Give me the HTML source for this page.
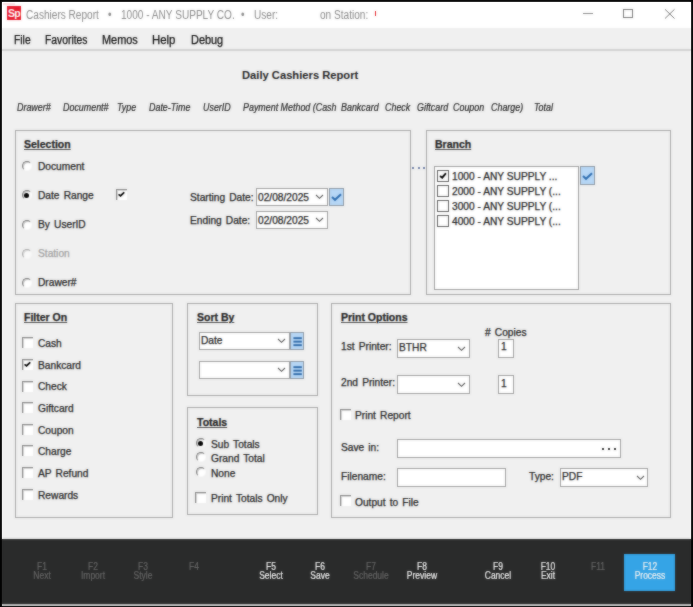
<!DOCTYPE html>
<html><head><meta charset="utf-8">
<style>
*{margin:0;padding:0;box-sizing:border-box}
html,body{width:693px;height:607px;overflow:hidden;background:#000}
body{position:relative;font-family:"Liberation Sans",sans-serif;font-size:10px;color:#1e1e1e}
#root{position:absolute;left:0;top:0;width:693px;height:607px}
.t,.gt,.mn{-webkit-text-stroke:0.25px currentColor}
.a{position:absolute}
.t{position:absolute;white-space:nowrap;line-height:10px;font-size:10.2px;word-spacing:1.3px}
.bl{word-spacing:0}
#win{position:absolute;left:2px;top:2px;width:689px;height:604px;background:#f0f0f0}
#title{position:absolute;left:2px;top:2px;width:689px;height:26px;background:#fff}
#menu{position:absolute;left:2px;top:28px;width:689px;height:23px;background:#f0f0f0;border-bottom:2px solid #d2d2d2}
.tt{position:absolute;white-space:nowrap;font-size:12px;line-height:12px;color:#8a8a8a;transform:scaleX(.84);transform-origin:0 0}
.mn{position:absolute;white-space:nowrap;font-size:12px;line-height:12px;color:#111;transform:scaleX(.87);transform-origin:0 0}
.grp{position:absolute;border:1px solid #a8a8a8}
.gt{position:absolute;white-space:nowrap;font-weight:bold;text-decoration:underline;text-decoration-color:#555;font-size:10.5px;line-height:10px;color:#222}
.hd{position:absolute;white-space:nowrap;font-style:italic;font-size:10px;line-height:10px;color:#2a2a2a;transform:scaleX(.89);transform-origin:0 0;-webkit-text-stroke:0.2px currentColor}
.inp{position:absolute;background:#fff;border:1px solid #a0a0a0}
.cb{position:absolute;width:11px;height:11px;background:#fff;border-top:1px solid #8a8a8a;border-left:1px solid #8a8a8a;box-shadow:inset 1px 1px 0 #d4d4d4}
.rd{position:absolute;width:10px;height:10px;border-radius:50%;background:#fff;border:1.5px solid #fafafa;border-top-color:#7c7c7c;border-left-color:#7c7c7c;box-shadow:inset 1px 1px 0 #c8c8c8}
.rd.on::after{content:"";position:absolute;left:1.3px;top:1.6px;width:5px;height:5px;border-radius:50%;background:#000}
.mcb{position:absolute;width:12px;height:12px;background:#fff;border:1.5px solid #606060}
.chev{position:absolute;width:5px;height:5px;border-right:1px solid #555;border-bottom:1px solid #555;transform:rotate(45deg)}
.btn{position:absolute;background:#b7d7f6;border:1px solid #8e9aa6}
#foot{position:absolute;left:2px;top:539px;width:689px;height:65px;background:#2a2b2b}
#fline{position:absolute;left:2px;top:604px;width:689px;height:2px;background:#b4b4b4}
.fk{position:absolute;width:50px;text-align:center;white-space:nowrap;font-size:10px;line-height:9.3px;color:#666;transform:scaleX(.85);transform-origin:50% 0;-webkit-text-stroke:0.2px currentColor}
.fk.on{color:#f2f2f2}
</style></head><body><div id="root">
<div id="win"></div>
<div id="title"></div>
<div id="menu"></div>

<!-- logo -->
<div class="a" style="left:3px;top:3px;width:12px;height:2px;background:#fbe1e5"></div>
<div class="a" style="left:7.4px;top:6.4px;width:14px;height:14px;background:#e8192c;color:#fff;font-weight:bold;font-size:10.5px;line-height:14px;text-align:center;letter-spacing:-0.8px;text-indent:-1px">Sp</div>
<div class="tt" style="left:26px;top:9px">Cashiers Report</div>
<div class="tt" style="left:108px;top:9px">•</div>
<div class="tt" style="left:121px;top:9px">1000 - ANY SUPPLY CO.</div>
<div class="tt" style="left:241px;top:9px">•</div>
<div class="tt" style="left:254px;top:9px">User:</div>
<div class="tt" style="left:320px;top:9px">on Station:</div>
<div class="a" style="left:375px;top:11px;width:1px;height:5px;background:#e31e24"></div>
<!-- window buttons -->
<div class="a" style="left:583px;top:13px;width:10px;height:1px;background:#8a8a8a"></div>
<div class="a" style="left:623px;top:9px;width:10px;height:9px;border:1px solid #7a7a7a"></div>
<svg class="a" style="left:664px;top:8px" width="12" height="12"><path d="M1 1.3L10.5 10.5M10.5 1.3L1 10.5" stroke="#7a7a7a" stroke-width="1"/></svg>

<!-- menu -->
<div class="mn" style="left:14px;top:34px;transform:scaleX(0.86)">File</div>
<div class="mn" style="left:45px;top:34px;transform:scaleX(0.86)">Favorites</div>
<div class="mn" style="left:102px;top:34px;transform:scaleX(0.91)">Memos</div>
<div class="mn" style="left:152px;top:34px;transform:scaleX(0.95)">Help</div>
<div class="mn" style="left:191px;top:34px;transform:scaleX(0.91)">Debug</div>

<div class="a" style="left:242px;top:70px;font-weight:bold;font-size:11.2px;line-height:11px;color:#222;white-space:nowrap">Daily Cashiers Report</div>

<!-- headers -->
<div class="hd" style="left:17px;top:103px">Drawer#</div>
<div class="hd" style="left:63px;top:103px">Document#</div>
<div class="hd" style="left:117px;top:103px">Type</div>
<div class="hd" style="left:149px;top:103px">Date-Time</div>
<div class="hd" style="left:203px;top:103px">UserID</div>
<div class="hd" style="left:243px;top:103px">Payment Method (Cash</div>
<div class="hd" style="left:341px;top:103px">Bankcard</div>
<div class="hd" style="left:385px;top:103px">Check</div>
<div class="hd" style="left:417px;top:103px">Giftcard</div>
<div class="hd" style="left:453px;top:103px">Coupon</div>
<div class="hd" style="left:491px;top:103px">Charge)</div>
<div class="hd" style="left:534px;top:103px">Total</div>

<!-- SELECTION -->
<div class="grp" style="left:15px;top:130px;width:396px;height:165px"></div>
<div class="gt" style="left:24px;top:139px">Selection</div>
<div class="rd" style="left:22px;top:161px"></div><div class="t" style="left:38px;top:162px">Document</div>
<div class="rd on" style="left:22px;top:190px"></div><div class="t" style="left:38px;top:191px">Date Range</div>
<div class="rd" style="left:22px;top:220px"></div><div class="t" style="left:38px;top:220px">By UserID</div>
<div class="rd" style="left:22px;top:249px;opacity:.6"></div><div class="t" style="left:38px;top:249px;color:#a0a0a0">Station</div>
<div class="rd" style="left:22px;top:278px"></div><div class="t" style="left:38px;top:278px">Drawer#</div>
<div class="cb" style="left:116px;top:189px"></div><svg class="a" style="left:118px;top:190px" width="10" height="10"><path d="M1.2 4.9L2.5 5.9L5.7 2.8" fill="none" stroke="#000" stroke-width="1.8" stroke-linecap="round"/></svg>

<div class="t" style="left:190px;top:193px">Starting Date:</div>
<div class="inp" style="left:256px;top:188px;width:72px;height:18px"></div>
<div class="t" style="left:258px;top:193px">02/08/2025</div>
<svg class="a" style="left:315.4px;top:194.3px" width="9" height="6"><path d="M1 1L4.5 4.3L8 1" fill="none" stroke="#5a5a5a" stroke-width="1.15"/></svg>
<div class="btn" style="left:329px;top:188px;width:15px;height:18px"></div><svg class="a" style="left:329px;top:188px" width="15" height="18"><path d="M3 9L6 11.8L12 6.2" fill="none" stroke="#2e6db0" stroke-width="2"/></svg>
<div class="t" style="left:190px;top:216px">Ending Date:</div>
<div class="inp" style="left:256px;top:211px;width:72px;height:18px"></div>
<div class="t" style="left:258px;top:216px">02/08/2025</div>
<svg class="a" style="left:315.4px;top:217.0px" width="9" height="6"><path d="M1 1L4.5 4.3L8 1" fill="none" stroke="#5a5a5a" stroke-width="1.15"/></svg>

<div class="a" style="left:412px;top:167px;width:2px;height:2px;background:#7080a8"></div><div class="a" style="left:417.5px;top:167px;width:2px;height:2px;background:#7080a8"></div><div class="a" style="left:423px;top:167px;width:2px;height:2px;background:#7080a8"></div>

<!-- BRANCH -->
<div class="grp" style="left:426px;top:130px;width:245px;height:165px"></div>
<div class="gt" style="left:435px;top:139px">Branch</div>
<div class="inp" style="left:434px;top:166px;width:145px;height:124px"></div>
<div class="mcb" style="left:437px;top:170px"></div><svg class="a" style="left:437px;top:170px" width="12" height="12"><path d="M3.6 6.4L5.2 7.6L8.4 3.8" fill="none" stroke="#000" stroke-width="1.9" stroke-linecap="round"/></svg><div class="t bl" style="left:452px;top:172px">1000 - ANY SUPPLY ...</div>
<div class="mcb" style="left:437px;top:185px"></div><div class="t bl" style="left:452px;top:187px">2000 - ANY SUPPLY (...</div>
<div class="mcb" style="left:437px;top:200px"></div><div class="t bl" style="left:452px;top:202px">3000 - ANY SUPPLY (...</div>
<div class="mcb" style="left:437px;top:215px"></div><div class="t bl" style="left:452px;top:217px">4000 - ANY SUPPLY (...</div>
<div class="btn" style="left:580px;top:166px;width:15px;height:19px"></div><svg class="a" style="left:580px;top:166.5px" width="15" height="18"><path d="M3 9L6 11.8L12 6.2" fill="none" stroke="#2e6db0" stroke-width="2"/></svg>

<!-- FILTER ON -->
<div class="grp" style="left:15px;top:303px;width:158px;height:215px"></div>
<div class="gt" style="left:24px;top:312px">Filter On</div>
<div class="cb" style="left:22px;top:337px"></div><div class="t" style="left:38px;top:339px">Cash</div>
<div class="cb" style="left:22px;top:359px"></div><svg class="a" style="left:24px;top:360px" width="10" height="10"><path d="M1.2 4.9L2.5 5.9L5.7 2.8" fill="none" stroke="#000" stroke-width="1.8" stroke-linecap="round"/></svg><div class="t" style="left:38px;top:361px">Bankcard</div>
<div class="cb" style="left:22px;top:381px"></div><div class="t" style="left:38px;top:382px">Check</div>
<div class="cb" style="left:22px;top:402px"></div><div class="t" style="left:38px;top:404px">Giftcard</div>
<div class="cb" style="left:22px;top:424px"></div><div class="t" style="left:38px;top:426px">Coupon</div>
<div class="cb" style="left:22px;top:445px"></div><div class="t" style="left:38px;top:447px">Charge</div>
<div class="cb" style="left:22px;top:467px"></div><div class="t" style="left:38px;top:469px">AP Refund</div>
<div class="cb" style="left:22px;top:489px"></div><div class="t" style="left:38px;top:491px">Rewards</div>

<!-- SORT BY -->
<div class="grp" style="left:187px;top:303px;width:131px;height:93px"></div>
<div class="gt" style="left:197px;top:312px">Sort By</div>
<div class="inp" style="left:199px;top:332px;width:91px;height:18px"></div>
<div class="t" style="left:201px;top:336px">Date</div>
<svg class="a" style="left:276.7px;top:338.3px" width="9" height="6"><path d="M1 1L4.5 4.3L8 1" fill="none" stroke="#5a5a5a" stroke-width="1.15"/></svg>
<div class="btn" style="left:290px;top:332px;width:14px;height:18px"></div><svg class="a" style="left:290px;top:332px" width="14" height="18"><rect x="3.4" y="5.2" width="8.4" height="1.9" fill="#2f6aa8"/><rect x="3.4" y="8.7" width="8.4" height="1.9" fill="#2f6aa8"/><rect x="3.4" y="12.2" width="8.4" height="1.9" fill="#2f6aa8"/></svg>
<div class="inp" style="left:199px;top:361px;width:91px;height:18px"></div>
<svg class="a" style="left:276.7px;top:367.1px" width="9" height="6"><path d="M1 1L4.5 4.3L8 1" fill="none" stroke="#5a5a5a" stroke-width="1.15"/></svg>
<div class="btn" style="left:290px;top:361px;width:14px;height:18px"></div><svg class="a" style="left:290px;top:361px" width="14" height="18"><rect x="3.4" y="5.2" width="8.4" height="1.9" fill="#2f6aa8"/><rect x="3.4" y="8.7" width="8.4" height="1.9" fill="#2f6aa8"/><rect x="3.4" y="12.2" width="8.4" height="1.9" fill="#2f6aa8"/></svg>

<!-- TOTALS -->
<div class="grp" style="left:187px;top:407px;width:131px;height:108px"></div>
<div class="gt" style="left:197px;top:417px">Totals</div>
<div class="rd on" style="left:196px;top:438px"></div><div class="t" style="left:211px;top:440px">Sub Totals</div>
<div class="rd" style="left:196px;top:452px"></div><div class="t" style="left:211px;top:454px">Grand Total</div>
<div class="rd" style="left:196px;top:467px"></div><div class="t" style="left:211px;top:469px">None</div>
<div class="cb" style="left:195px;top:492px"></div><div class="t" style="left:211px;top:494px">Print Totals Only</div>

<!-- PRINT OPTIONS -->
<div class="grp" style="left:331px;top:303px;width:340px;height:215px"></div>
<div class="gt" style="left:341px;top:312px">Print Options</div>
<div class="t" style="left:485px;top:328px">#&nbsp;Copies</div>
<div class="t" style="left:341px;top:342px">1st Printer:</div>
<div class="inp" style="left:397px;top:339px;width:73px;height:19px"></div>
<div class="t" style="left:399px;top:343px">BTHR</div>
<svg class="a" style="left:456.8px;top:345.8px" width="9" height="6"><path d="M1 1L4.5 4.3L8 1" fill="none" stroke="#5a5a5a" stroke-width="1.15"/></svg>
<div class="inp" style="left:498px;top:339px;width:16px;height:19px"></div>
<div class="t" style="left:501px;top:342px">1</div>
<div class="t" style="left:341px;top:378px">2nd Printer:</div>
<div class="inp" style="left:397px;top:375px;width:73px;height:19px"></div>
<svg class="a" style="left:456.8px;top:381.6px" width="9" height="6"><path d="M1 1L4.5 4.3L8 1" fill="none" stroke="#5a5a5a" stroke-width="1.15"/></svg>
<div class="inp" style="left:498px;top:375px;width:16px;height:19px"></div>
<div class="t" style="left:501px;top:379px">1</div>
<div class="cb" style="left:340px;top:409px"></div><div class="t" style="left:355px;top:411px">Print Report</div>
<div class="t" style="left:341px;top:443px">Save in:</div>
<div class="inp" style="left:397px;top:439px;width:224px;height:19px"></div>
<div class="a" style="left:602px;top:448px;width:2px;height:2px;background:#333"></div><div class="a" style="left:608px;top:448px;width:2px;height:2px;background:#333"></div><div class="a" style="left:614px;top:448px;width:2px;height:2px;background:#333"></div>
<div class="t" style="left:341px;top:472px">Filename:</div>
<div class="inp" style="left:397px;top:468px;width:109px;height:19px"></div>
<div class="t" style="left:529px;top:472px">Type:</div>
<div class="inp" style="left:560px;top:468px;width:88px;height:19px"></div>
<div class="t" style="left:562px;top:472px">PDF</div>
<svg class="a" style="left:635.7px;top:475.2px" width="9" height="6"><path d="M1 1L4.5 4.3L8 1" fill="none" stroke="#5a5a5a" stroke-width="1.15"/></svg>
<div class="cb" style="left:340px;top:495px"></div><div class="t" style="left:355px;top:498px">Output to File</div>

<!-- FOOTER -->
<div id="foot"></div>
<div id="fline"></div>
<div class="fk" style="left:17px;top:562px">F1<br>Next</div>
<div class="fk" style="left:68px;top:562px">F2<br>Import</div>
<div class="fk" style="left:118px;top:562px">F3<br>Style</div>
<div class="fk" style="left:169px;top:562px">F4</div>
<div class="fk on" style="left:246px;top:562px">F5<br>Select</div>
<div class="fk on" style="left:295px;top:562px">F6<br>Save</div>
<div class="fk" style="left:346px;top:562px">F7<br>Schedule</div>
<div class="fk on" style="left:397px;top:562px">F8<br>Preview</div>
<div class="fk on" style="left:473px;top:562px">F9<br>Cancel</div>
<div class="fk on" style="left:523px;top:562px">F10<br>Exit</div>
<div class="fk" style="left:573px;top:562px">F11</div>
<div class="a" style="left:624px;top:554px;width:51px;height:37px;background:#35a4e6"></div>
<div class="fk on" style="left:625px;top:562px">F12<br>Process</div>
</div><div id="root2" style="position:absolute;left:0;top:0;width:693px;height:607px;filter:blur(0.8px);opacity:.5">
<div id="win"></div>
<div id="title"></div>
<div id="menu"></div>

<!-- logo -->
<div class="a" style="left:3px;top:3px;width:12px;height:2px;background:#fbe1e5"></div>
<div class="a" style="left:7.4px;top:6.4px;width:14px;height:14px;background:#e8192c;color:#fff;font-weight:bold;font-size:10.5px;line-height:14px;text-align:center;letter-spacing:-0.8px;text-indent:-1px">Sp</div>
<div class="tt" style="left:26px;top:9px">Cashiers Report</div>
<div class="tt" style="left:108px;top:9px">•</div>
<div class="tt" style="left:121px;top:9px">1000 - ANY SUPPLY CO.</div>
<div class="tt" style="left:241px;top:9px">•</div>
<div class="tt" style="left:254px;top:9px">User:</div>
<div class="tt" style="left:320px;top:9px">on Station:</div>
<div class="a" style="left:375px;top:11px;width:1px;height:5px;background:#e31e24"></div>
<!-- window buttons -->
<div class="a" style="left:583px;top:13px;width:10px;height:1px;background:#8a8a8a"></div>
<div class="a" style="left:623px;top:9px;width:10px;height:9px;border:1px solid #7a7a7a"></div>
<svg class="a" style="left:664px;top:8px" width="12" height="12"><path d="M1 1.3L10.5 10.5M10.5 1.3L1 10.5" stroke="#7a7a7a" stroke-width="1"/></svg>

<!-- menu -->
<div class="mn" style="left:14px;top:34px;transform:scaleX(0.86)">File</div>
<div class="mn" style="left:45px;top:34px;transform:scaleX(0.86)">Favorites</div>
<div class="mn" style="left:102px;top:34px;transform:scaleX(0.91)">Memos</div>
<div class="mn" style="left:152px;top:34px;transform:scaleX(0.95)">Help</div>
<div class="mn" style="left:191px;top:34px;transform:scaleX(0.91)">Debug</div>

<div class="a" style="left:242px;top:70px;font-weight:bold;font-size:11.2px;line-height:11px;color:#222;white-space:nowrap">Daily Cashiers Report</div>

<!-- headers -->
<div class="hd" style="left:17px;top:103px">Drawer#</div>
<div class="hd" style="left:63px;top:103px">Document#</div>
<div class="hd" style="left:117px;top:103px">Type</div>
<div class="hd" style="left:149px;top:103px">Date-Time</div>
<div class="hd" style="left:203px;top:103px">UserID</div>
<div class="hd" style="left:243px;top:103px">Payment Method (Cash</div>
<div class="hd" style="left:341px;top:103px">Bankcard</div>
<div class="hd" style="left:385px;top:103px">Check</div>
<div class="hd" style="left:417px;top:103px">Giftcard</div>
<div class="hd" style="left:453px;top:103px">Coupon</div>
<div class="hd" style="left:491px;top:103px">Charge)</div>
<div class="hd" style="left:534px;top:103px">Total</div>

<!-- SELECTION -->
<div class="grp" style="left:15px;top:130px;width:396px;height:165px"></div>
<div class="gt" style="left:24px;top:139px">Selection</div>
<div class="rd" style="left:22px;top:161px"></div><div class="t" style="left:38px;top:162px">Document</div>
<div class="rd on" style="left:22px;top:190px"></div><div class="t" style="left:38px;top:191px">Date Range</div>
<div class="rd" style="left:22px;top:220px"></div><div class="t" style="left:38px;top:220px">By UserID</div>
<div class="rd" style="left:22px;top:249px;opacity:.6"></div><div class="t" style="left:38px;top:249px;color:#a0a0a0">Station</div>
<div class="rd" style="left:22px;top:278px"></div><div class="t" style="left:38px;top:278px">Drawer#</div>
<div class="cb" style="left:116px;top:189px"></div><svg class="a" style="left:118px;top:190px" width="10" height="10"><path d="M1.2 4.9L2.5 5.9L5.7 2.8" fill="none" stroke="#000" stroke-width="1.8" stroke-linecap="round"/></svg>

<div class="t" style="left:190px;top:193px">Starting Date:</div>
<div class="inp" style="left:256px;top:188px;width:72px;height:18px"></div>
<div class="t" style="left:258px;top:193px">02/08/2025</div>
<svg class="a" style="left:315.4px;top:194.3px" width="9" height="6"><path d="M1 1L4.5 4.3L8 1" fill="none" stroke="#5a5a5a" stroke-width="1.15"/></svg>
<div class="btn" style="left:329px;top:188px;width:15px;height:18px"></div><svg class="a" style="left:329px;top:188px" width="15" height="18"><path d="M3 9L6 11.8L12 6.2" fill="none" stroke="#2e6db0" stroke-width="2"/></svg>
<div class="t" style="left:190px;top:216px">Ending Date:</div>
<div class="inp" style="left:256px;top:211px;width:72px;height:18px"></div>
<div class="t" style="left:258px;top:216px">02/08/2025</div>
<svg class="a" style="left:315.4px;top:217.0px" width="9" height="6"><path d="M1 1L4.5 4.3L8 1" fill="none" stroke="#5a5a5a" stroke-width="1.15"/></svg>

<div class="a" style="left:412px;top:167px;width:2px;height:2px;background:#7080a8"></div><div class="a" style="left:417.5px;top:167px;width:2px;height:2px;background:#7080a8"></div><div class="a" style="left:423px;top:167px;width:2px;height:2px;background:#7080a8"></div>

<!-- BRANCH -->
<div class="grp" style="left:426px;top:130px;width:245px;height:165px"></div>
<div class="gt" style="left:435px;top:139px">Branch</div>
<div class="inp" style="left:434px;top:166px;width:145px;height:124px"></div>
<div class="mcb" style="left:437px;top:170px"></div><svg class="a" style="left:437px;top:170px" width="12" height="12"><path d="M3.6 6.4L5.2 7.6L8.4 3.8" fill="none" stroke="#000" stroke-width="1.9" stroke-linecap="round"/></svg><div class="t bl" style="left:452px;top:172px">1000 - ANY SUPPLY ...</div>
<div class="mcb" style="left:437px;top:185px"></div><div class="t bl" style="left:452px;top:187px">2000 - ANY SUPPLY (...</div>
<div class="mcb" style="left:437px;top:200px"></div><div class="t bl" style="left:452px;top:202px">3000 - ANY SUPPLY (...</div>
<div class="mcb" style="left:437px;top:215px"></div><div class="t bl" style="left:452px;top:217px">4000 - ANY SUPPLY (...</div>
<div class="btn" style="left:580px;top:166px;width:15px;height:19px"></div><svg class="a" style="left:580px;top:166.5px" width="15" height="18"><path d="M3 9L6 11.8L12 6.2" fill="none" stroke="#2e6db0" stroke-width="2"/></svg>

<!-- FILTER ON -->
<div class="grp" style="left:15px;top:303px;width:158px;height:215px"></div>
<div class="gt" style="left:24px;top:312px">Filter On</div>
<div class="cb" style="left:22px;top:337px"></div><div class="t" style="left:38px;top:339px">Cash</div>
<div class="cb" style="left:22px;top:359px"></div><svg class="a" style="left:24px;top:360px" width="10" height="10"><path d="M1.2 4.9L2.5 5.9L5.7 2.8" fill="none" stroke="#000" stroke-width="1.8" stroke-linecap="round"/></svg><div class="t" style="left:38px;top:361px">Bankcard</div>
<div class="cb" style="left:22px;top:381px"></div><div class="t" style="left:38px;top:382px">Check</div>
<div class="cb" style="left:22px;top:402px"></div><div class="t" style="left:38px;top:404px">Giftcard</div>
<div class="cb" style="left:22px;top:424px"></div><div class="t" style="left:38px;top:426px">Coupon</div>
<div class="cb" style="left:22px;top:445px"></div><div class="t" style="left:38px;top:447px">Charge</div>
<div class="cb" style="left:22px;top:467px"></div><div class="t" style="left:38px;top:469px">AP Refund</div>
<div class="cb" style="left:22px;top:489px"></div><div class="t" style="left:38px;top:491px">Rewards</div>

<!-- SORT BY -->
<div class="grp" style="left:187px;top:303px;width:131px;height:93px"></div>
<div class="gt" style="left:197px;top:312px">Sort By</div>
<div class="inp" style="left:199px;top:332px;width:91px;height:18px"></div>
<div class="t" style="left:201px;top:336px">Date</div>
<svg class="a" style="left:276.7px;top:338.3px" width="9" height="6"><path d="M1 1L4.5 4.3L8 1" fill="none" stroke="#5a5a5a" stroke-width="1.15"/></svg>
<div class="btn" style="left:290px;top:332px;width:14px;height:18px"></div><svg class="a" style="left:290px;top:332px" width="14" height="18"><rect x="3.4" y="5.2" width="8.4" height="1.9" fill="#2f6aa8"/><rect x="3.4" y="8.7" width="8.4" height="1.9" fill="#2f6aa8"/><rect x="3.4" y="12.2" width="8.4" height="1.9" fill="#2f6aa8"/></svg>
<div class="inp" style="left:199px;top:361px;width:91px;height:18px"></div>
<svg class="a" style="left:276.7px;top:367.1px" width="9" height="6"><path d="M1 1L4.5 4.3L8 1" fill="none" stroke="#5a5a5a" stroke-width="1.15"/></svg>
<div class="btn" style="left:290px;top:361px;width:14px;height:18px"></div><svg class="a" style="left:290px;top:361px" width="14" height="18"><rect x="3.4" y="5.2" width="8.4" height="1.9" fill="#2f6aa8"/><rect x="3.4" y="8.7" width="8.4" height="1.9" fill="#2f6aa8"/><rect x="3.4" y="12.2" width="8.4" height="1.9" fill="#2f6aa8"/></svg>

<!-- TOTALS -->
<div class="grp" style="left:187px;top:407px;width:131px;height:108px"></div>
<div class="gt" style="left:197px;top:417px">Totals</div>
<div class="rd on" style="left:196px;top:438px"></div><div class="t" style="left:211px;top:440px">Sub Totals</div>
<div class="rd" style="left:196px;top:452px"></div><div class="t" style="left:211px;top:454px">Grand Total</div>
<div class="rd" style="left:196px;top:467px"></div><div class="t" style="left:211px;top:469px">None</div>
<div class="cb" style="left:195px;top:492px"></div><div class="t" style="left:211px;top:494px">Print Totals Only</div>

<!-- PRINT OPTIONS -->
<div class="grp" style="left:331px;top:303px;width:340px;height:215px"></div>
<div class="gt" style="left:341px;top:312px">Print Options</div>
<div class="t" style="left:485px;top:328px">#&nbsp;Copies</div>
<div class="t" style="left:341px;top:342px">1st Printer:</div>
<div class="inp" style="left:397px;top:339px;width:73px;height:19px"></div>
<div class="t" style="left:399px;top:343px">BTHR</div>
<svg class="a" style="left:456.8px;top:345.8px" width="9" height="6"><path d="M1 1L4.5 4.3L8 1" fill="none" stroke="#5a5a5a" stroke-width="1.15"/></svg>
<div class="inp" style="left:498px;top:339px;width:16px;height:19px"></div>
<div class="t" style="left:501px;top:342px">1</div>
<div class="t" style="left:341px;top:378px">2nd Printer:</div>
<div class="inp" style="left:397px;top:375px;width:73px;height:19px"></div>
<svg class="a" style="left:456.8px;top:381.6px" width="9" height="6"><path d="M1 1L4.5 4.3L8 1" fill="none" stroke="#5a5a5a" stroke-width="1.15"/></svg>
<div class="inp" style="left:498px;top:375px;width:16px;height:19px"></div>
<div class="t" style="left:501px;top:379px">1</div>
<div class="cb" style="left:340px;top:409px"></div><div class="t" style="left:355px;top:411px">Print Report</div>
<div class="t" style="left:341px;top:443px">Save in:</div>
<div class="inp" style="left:397px;top:439px;width:224px;height:19px"></div>
<div class="a" style="left:602px;top:448px;width:2px;height:2px;background:#333"></div><div class="a" style="left:608px;top:448px;width:2px;height:2px;background:#333"></div><div class="a" style="left:614px;top:448px;width:2px;height:2px;background:#333"></div>
<div class="t" style="left:341px;top:472px">Filename:</div>
<div class="inp" style="left:397px;top:468px;width:109px;height:19px"></div>
<div class="t" style="left:529px;top:472px">Type:</div>
<div class="inp" style="left:560px;top:468px;width:88px;height:19px"></div>
<div class="t" style="left:562px;top:472px">PDF</div>
<svg class="a" style="left:635.7px;top:475.2px" width="9" height="6"><path d="M1 1L4.5 4.3L8 1" fill="none" stroke="#5a5a5a" stroke-width="1.15"/></svg>
<div class="cb" style="left:340px;top:495px"></div><div class="t" style="left:355px;top:498px">Output to File</div>

<!-- FOOTER -->
<div id="foot"></div>
<div id="fline"></div>
<div class="fk" style="left:17px;top:562px">F1<br>Next</div>
<div class="fk" style="left:68px;top:562px">F2<br>Import</div>
<div class="fk" style="left:118px;top:562px">F3<br>Style</div>
<div class="fk" style="left:169px;top:562px">F4</div>
<div class="fk on" style="left:246px;top:562px">F5<br>Select</div>
<div class="fk on" style="left:295px;top:562px">F6<br>Save</div>
<div class="fk" style="left:346px;top:562px">F7<br>Schedule</div>
<div class="fk on" style="left:397px;top:562px">F8<br>Preview</div>
<div class="fk on" style="left:473px;top:562px">F9<br>Cancel</div>
<div class="fk on" style="left:523px;top:562px">F10<br>Exit</div>
<div class="fk" style="left:573px;top:562px">F11</div>
<div class="a" style="left:624px;top:554px;width:51px;height:37px;background:#35a4e6"></div>
<div class="fk on" style="left:625px;top:562px">F12<br>Process</div>
</div></body></html>
